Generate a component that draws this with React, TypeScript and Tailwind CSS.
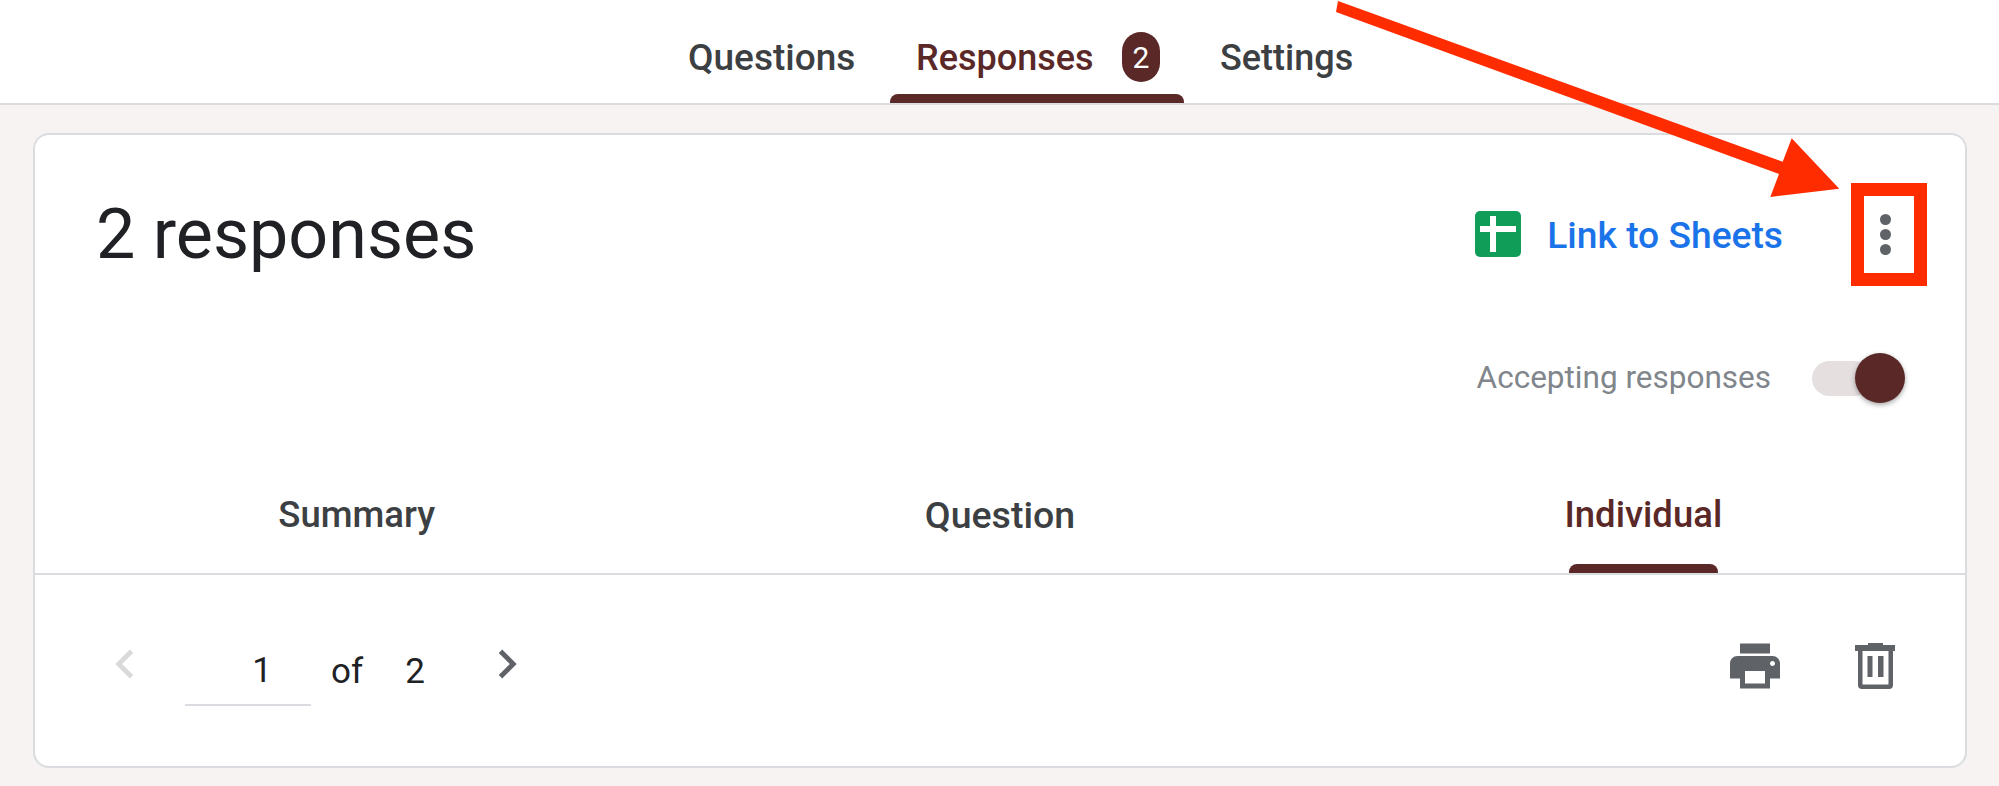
import React from "react";

const MAROON = "bg-[#5b2828]";

function Trash() {
  return (
    <svg width="40" height="46" viewBox="0 0 40 46" className="fill-[#5f6368]">
      <path
        fillRule="evenodd"
        d="M13 0h15v2h12v6h-2v34a4 4 0 0 1-4 4H7a4 4 0 0 1-4-4V8H0V2h13zM7.500 8v33.500h26V8zM12.500 13h5v21h-5zM23 13h5.500v21H23z"
      />
    </svg>
  );
}

export default function App() {
  return (
    <div className="relative w-[1999px] h-[786px] overflow-hidden bg-[#f6f3f2] font-['Roboto',sans-serif]">
      <header className="h-[105px] bg-white border-b-2 border-[#dadce0] flex justify-start pl-[688px]">
        <div className="flex items-start gap-[35px] text-[36.500px] font-medium text-[#3c4043]">
          <span className="mt-[38px] w-[167px] leading-[40px] text-[37px]">Questions</span>
          <div className="relative h-[103px] w-[294px] pl-[26px] flex items-start text-[#5b2828]">
            <span className="mt-[38px] leading-[40px] text-[36px]">Responses</span>
            <span className="absolute left-[232px] top-[32px] w-[38px] h-[50px] rounded-full bg-[#5b2828] text-white text-[30px] font-normal flex items-center justify-center">
              2
            </span>
            <div className={`absolute left-0 right-0 bottom-0 h-[9px] rounded-t-[8px] ${MAROON}`} />
          </div>
          <span className="mt-[38px] ml-[1px] leading-[40px] text-[36px]">Settings</span>
        </div>
      </header>

      <main className="mt-[28px] ml-[33px] w-[1934px] h-[635px] bg-white border-2 border-[#dadce0] rounded-[16px] flex flex-col">
        <div className="h-[198px] flex items-center pl-[61px] pr-[74px]">
          <h1 className="text-[70px] leading-none text-[#202124]">2 responses</h1>
          <div className="ml-auto flex items-center">
            <svg width="46" height="46" viewBox="0 0 46 46">
              <rect width="46" height="46" rx="5" fill="#0f9d58" />
              <path d="M5 15h36v6H5zM15 5h6v36h-6z" fill="#fff" />
            </svg>
            <a className="ml-[26px] mt-[1px] text-[37.200px] font-medium text-[#1a73e8] leading-[40px]">Link to Sheets</a>
            <div className="ml-[97px] flex flex-col gap-[4px]">
              <span className="block w-[11px] h-[11px] rounded-full bg-[#5f6368]" />
              <span className="block w-[11px] h-[11px] rounded-full bg-[#5f6368]" />
              <span className="block w-[11px] h-[11px] rounded-full bg-[#5f6368]" />
            </div>
          </div>
        </div>

        <div className="h-[90px] flex items-center justify-end pr-[60px]">
          <span className="text-[31.500px] text-[#80868b]">Accepting responses</span>
          <div className="ml-[41px] w-[60px] h-[35px] rounded-full bg-[#e6dfe0]" />
          <div className="-ml-[17px] w-[50px] h-[50px] rounded-full bg-[#5b2828] shadow-[0_2px_5px_rgba(0,0,0,0.35)]" />
        </div>

        <div className="h-[150px] flex font-medium text-[#3c4043]">
          <div className="flex-1 flex flex-col items-center pt-[72px]">
            <span className="leading-[40px] text-[36.500px]">Summary</span>
          </div>
          <div className="flex-1 flex flex-col items-center pt-[72px]">
            <span className="leading-[40px] text-[37.500px]">Question</span>
          </div>
          <div className="flex-1 flex flex-col items-center pt-[72px] text-[#5b2828]">
            <span className="leading-[40px] text-[36.500px]">Individual</span>
            <div className={`mt-auto w-[149px] h-[9px] rounded-t-[8px] ${MAROON}`} />
          </div>
        </div>

        <div className="flex-1 border-t-2 border-[#dadce0] flex items-center pl-[61px] pr-[70px] text-[35px] text-[#202124]">
          <svg width="58" height="58" viewBox="0 0 24 24" className="mb-[14px] fill-[#dadada]">
            <path d="M15.41 7.41L14 6l-6 6 6 6 1.41-1.41L10.83 12z" />
          </svg>
          <div className="ml-[31px] w-[126px] h-[70px] border-b-2 border-[#dadce0] flex items-center justify-center pl-[28px] pt-[4px]">
            1
          </div>
          <span className="ml-[20px] mt-[4px]">of</span>
          <span className="ml-[42px] mt-[4px]">2</span>
          <svg width="58" height="58" viewBox="0 0 24 24" className="ml-[53px] mb-[14px] fill-[#5f6368]">
            <path d="M10 6L8.590 7.410 13.170 12l-4.580 4.590L10 18l6-6z" />
          </svg>
          <div className="ml-auto flex items-center gap-[70px] mb-[10px]">
            <svg width="60" height="60" viewBox="0 0 24 24" className="fill-[#5f6368]">
              <path d="M19 8H5c-1.660 0-3 1.340-3 3v6h4v4h12v-4h4v-6c0-1.660-1.340-3-3-3zm-3 11H8v-5h8v5zm3-7c-.55 0-1-.45-1-1s.45-1 1-1 1 .45 1 1-.45 1-1 1zm-1-9H6v4h12V3z" />
            </svg>
            <Trash />
          </div>
        </div>
      </main>

      {/* annotation over the page */}
      <svg className="absolute left-0 top-0 pointer-events-none" width="1999" height="786" viewBox="0 0 1999 786">
        <polygon
          points="1338,1 1336,12 1779,174 1770.300,197 1839.300,188.700 1791.700,138.300 1782.700,161.700"
          fill="#ff2c00"
        />
      </svg>
      <div className="absolute left-[1851px] top-[183px] w-[76px] h-[103px] border-[13px] border-[#ff2c00]" />
    </div>
  );
}
